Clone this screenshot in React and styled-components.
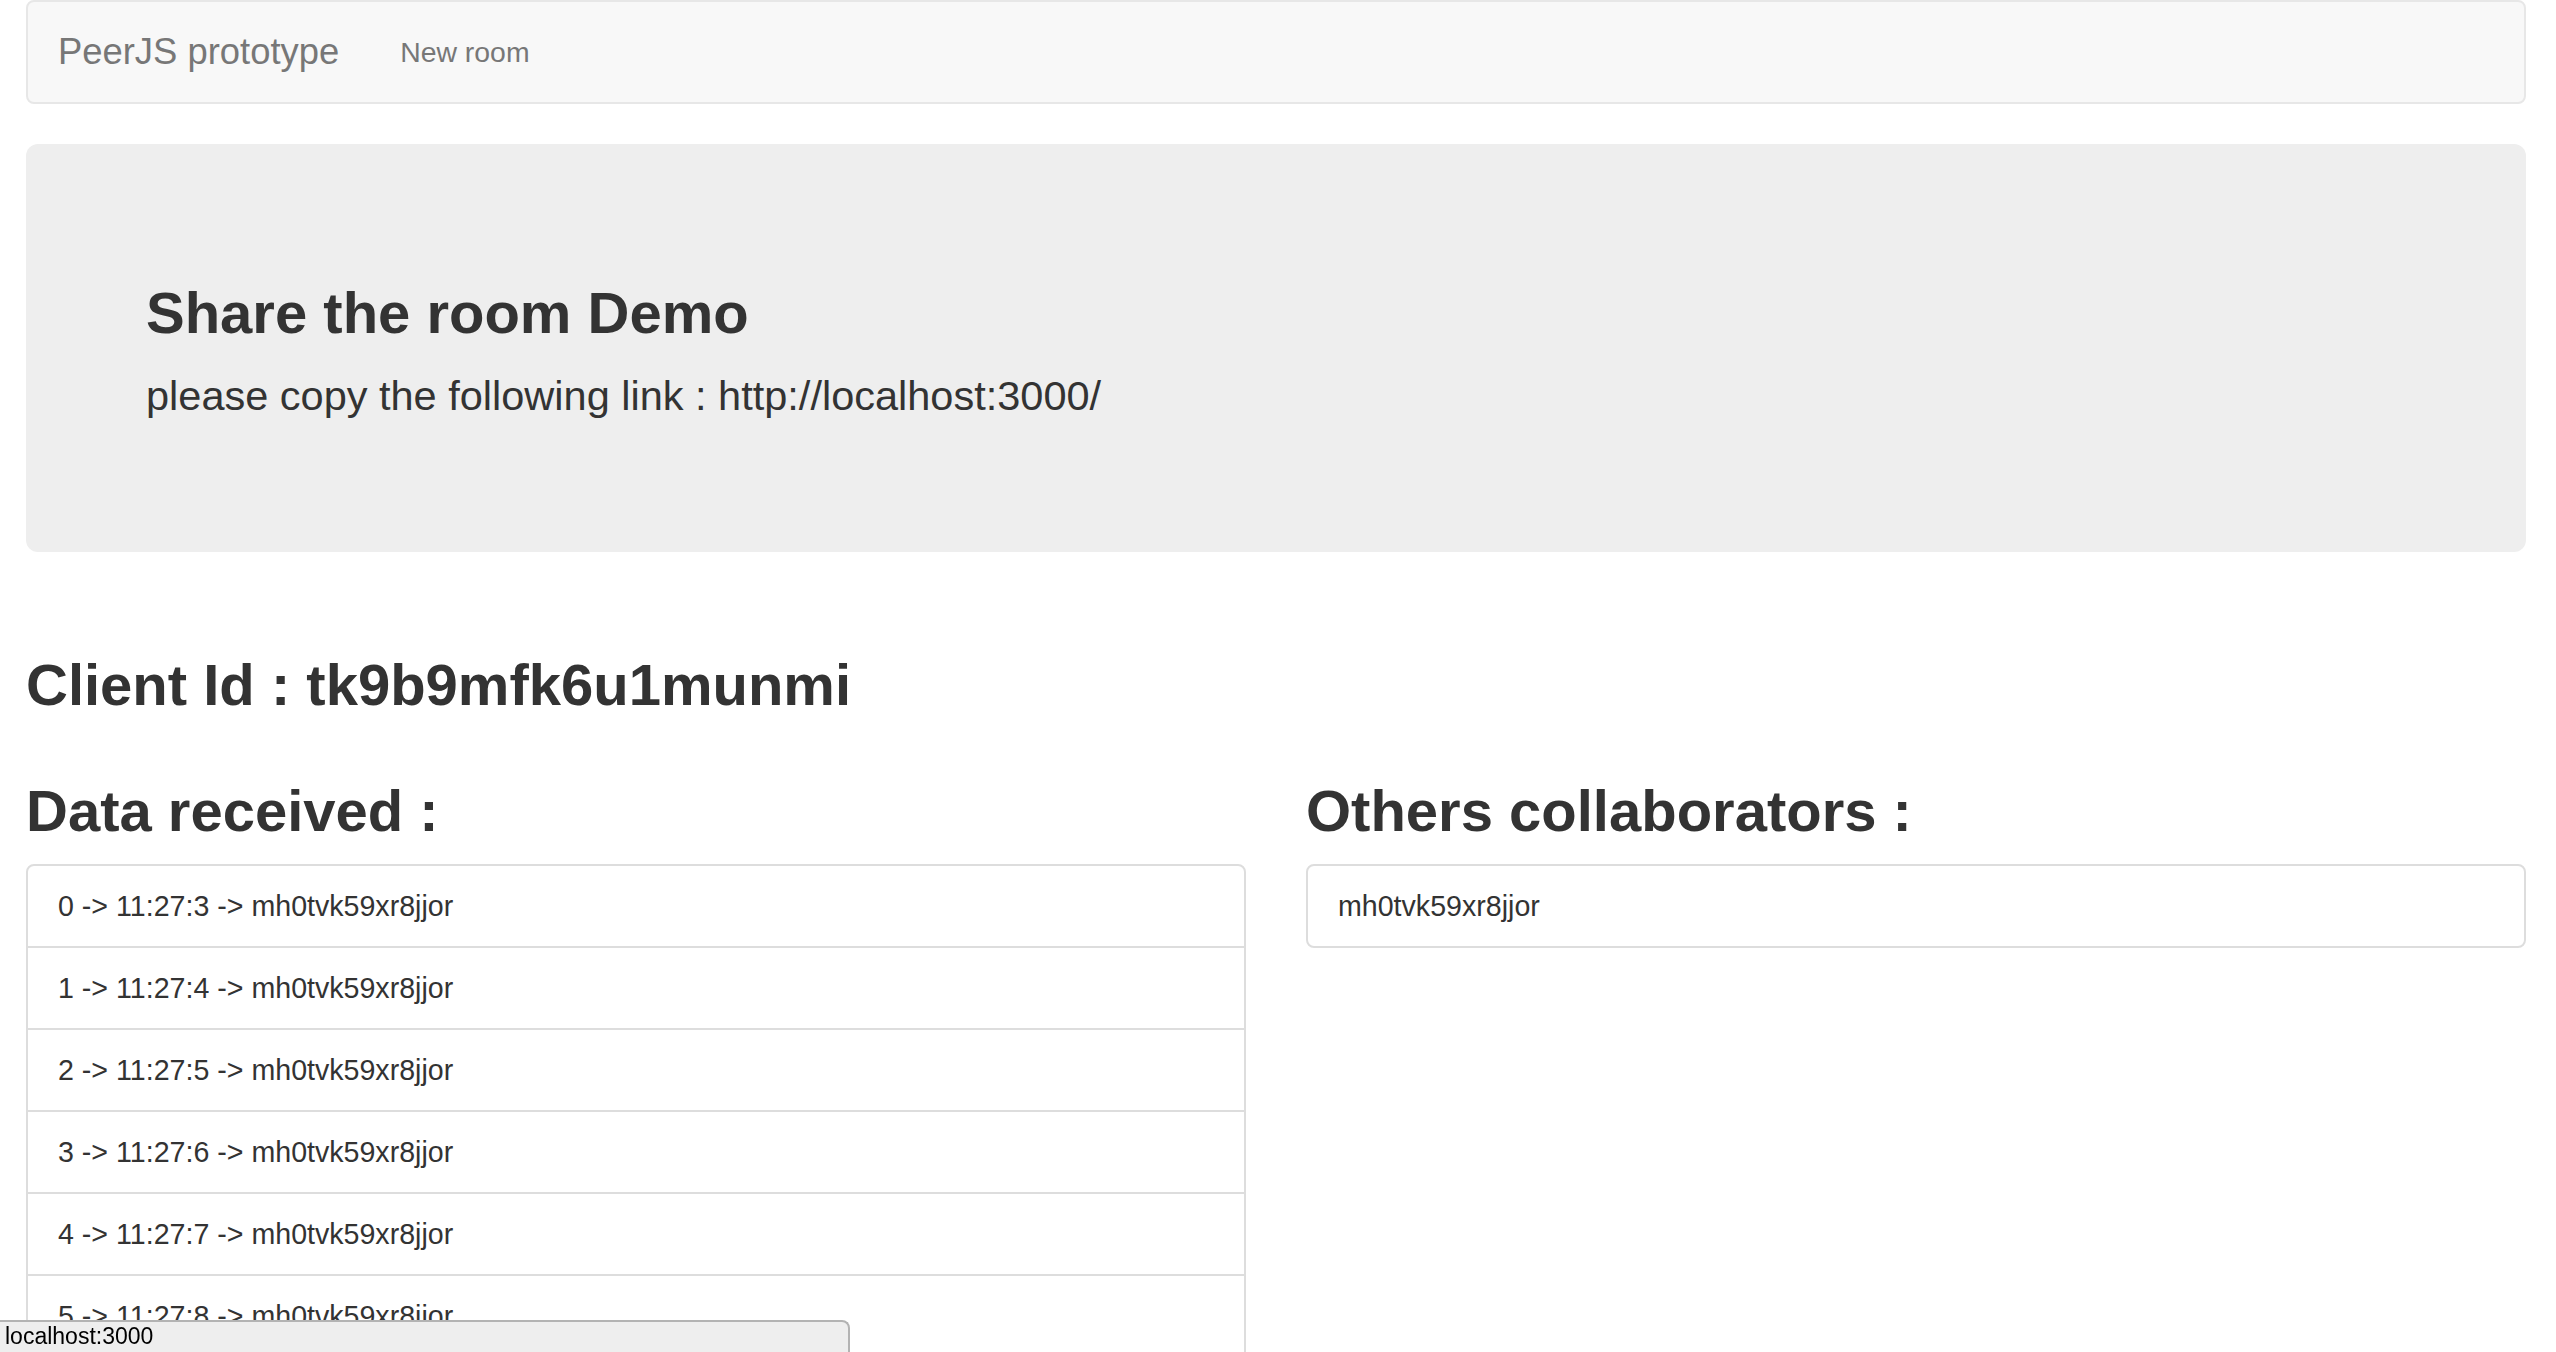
import React from "react";
import styled, { createGlobalStyle } from "styled-components";

const GlobalStyle = createGlobalStyle`
  html, body {
    margin: 0;
    overflow: hidden;
  }
  body {
    font-family: "Liberation Sans", Arial, sans-serif;
    font-size: 28px;
    line-height: 40px;
    color: #333;
    background: #fff;
  }
  * {
    box-sizing: border-box;
  }
`;

const Container = styled.div`
  display: flex;
  flex-direction: column;
  padding: 0 30px 0 26px;
`;

const Navbar = styled.nav`
  display: flex;
  align-items: center;
  min-height: 104px;
  margin-bottom: 40px;
  background: #f8f8f8;
  border: 2px solid #e7e7e7;
  border-radius: 8px;
  padding-left: 30px;
`;

const Brand = styled.a`
  font-size: 36.4px;
  line-height: 40px;
  color: #777;
  text-decoration: none;
  padding-right: 31px;
`;

const NavLink = styled.a`
  font-size: 28.4px;
  line-height: 40px;
  color: #777;
  text-decoration: none;
  padding: 30px;
`;

const Jumbotron = styled.section`
  background: #eee;
  border-radius: 12px;
  padding: 96px 120px;
  margin-bottom: 60px;
`;

const Heading = styled.h2`
  font-size: 58px;
  line-height: 66px;
  font-weight: 700;
  margin: 40px 0 20px;
  color: #333;
`;

const Lead = styled.p`
  font-size: 41.5px;
  line-height: 60px;
  font-weight: 400;
  margin: 0 0 30px;
  color: #333;
`;

const Row = styled.div`
  display: grid;
  grid-template-columns: 1fr 1fr;
  margin: 0 -30px;
`;

const Column = styled.div`
  padding: 0 30px;
`;

const ListGroup = styled.ul`
  list-style: none;
  margin: 0 0 40px;
  padding: 0;
`;

const ListItem = styled.li`
  padding: 20px 30px;
  border: 2px solid #ddd;
  margin-bottom: -2px;
  background: #fff;
  font-size: 28.6px;
  line-height: 40px;

  &:first-child {
    border-top-left-radius: 8px;
    border-top-right-radius: 8px;
  }
  &:last-child {
    margin-bottom: 0;
    border-bottom-left-radius: 8px;
    border-bottom-right-radius: 8px;
  }
`;

const StatusBar = styled.div`
  position: fixed;
  left: 0;
  bottom: 0;
  width: 850px;
  height: 32px;
  background: #eee;
  border-top: 2px solid #b3b3b3;
  border-right: 2px solid #b3b3b3;
  border-top-right-radius: 8px;
  padding-left: 5px;
  font-size: 23px;
  line-height: 28px;
  color: #000;
`;

const clientId = "tk9b9mfk6u1munmi";
const peer = "mh0tvk59xr8jjor";
const received = [3, 4, 5, 6, 7, 8, 9, 10].map((s, i) => ({
  index: i,
  time: `11:27:${s}`,
  from: peer,
}));

export default function App() {
  return (
    <>
      <GlobalStyle />
      <Container>
        <Navbar>
          <Brand href="#">PeerJS prototype</Brand>
          <NavLink href="#">New room</NavLink>
        </Navbar>
        <Jumbotron>
          <Heading>Share the room Demo</Heading>
          <Lead>please copy the following link : http://localhost:3000/</Lead>
        </Jumbotron>
        <Heading>Client Id : {clientId}</Heading>
        <Row>
          <Column>
            <Heading>Data received :</Heading>
            <ListGroup>
              {received.map((d) => (
                <ListItem key={d.index}>
                  {d.index} -&gt; {d.time} -&gt; {d.from}
                </ListItem>
              ))}
            </ListGroup>
          </Column>
          <Column>
            <Heading>Others collaborators :</Heading>
            <ListGroup>
              <ListItem>{peer}</ListItem>
            </ListGroup>
          </Column>
        </Row>
      </Container>
      <StatusBar>localhost:3000</StatusBar>
    </>
  );
}
